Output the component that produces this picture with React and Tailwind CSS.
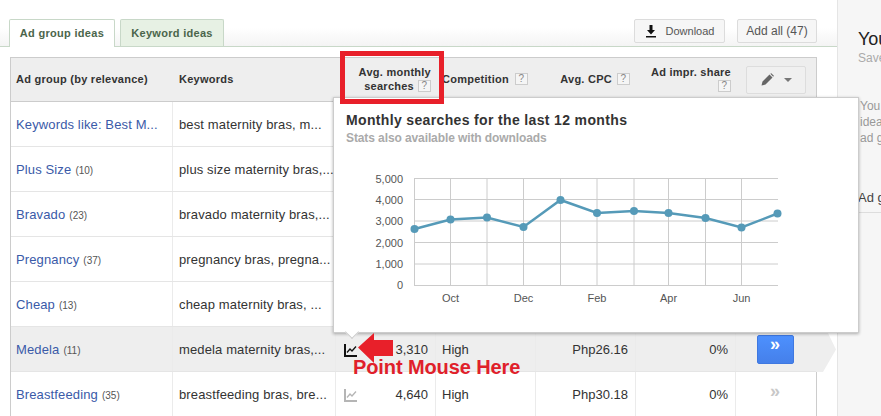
const rows = [
  { name: "Keywords like: Best M...", keywords: "best maternity bras, m..." },
  { name: "Plus Size", count: 10, keywords: "plus size maternity bras,..." },
  { name: "Bravado", count: 23, keywords: "bravado maternity bras,..." },
  { name: "Pregnancy", count: 37, keywords: "pregnancy bras, pregna..." },
  { name: "Cheap", count: 13, keywords: "cheap maternity bras, ..." },
  { name: "Medela", count: 11, keywords: "medela maternity bras,...", searches: "3,310", cpc: "Php26.16", active: true },
  { name: "Breastfeeding", count: 35, keywords: "breastfeeding bras, bre...", searches: "4,640", cpc: "Php30.18" },
];

const gridCols = "grid grid-cols-[162px_163px_100px_100px_100px_100px_80px]";

const points = [
  [414.5, 229], [450.5, 219.5], [487, 217.5], [523.5, 227], [560.5, 200], [597, 213],
  [634, 211], [668.5, 213], [705.5, 218], [741.5, 227.5], [777.5, 213.5],
];
const gridX = [450.5, 487, 523.5, 560.5, 597, 634, 668.5, 705.5, 741.5];
const gridY = [178.5, 199.5, 221, 242.5, 264];
const yLabels = [["5,000", 178.5], ["4,000", 199.5], ["3,000", 221], ["2,000", 242.5], ["1,000", 264], ["0", 285]];
const xLabels = [["Oct", 450.5], ["Dec", 523.5], ["Feb", 597], ["Apr", 668.5], ["Jun", 741.5]];

function Help() {
  return (
    <span className="inline-flex h-[12px] w-[13px] items-center justify-center border border-[#cccccc] bg-[#f5f5f5] text-[10px] font-normal leading-none text-[#888888]">
      ?
    </span>
  );
}

function TrendIcon({ active }) {
  const color = active ? "#111111" : "#b5b5b5";
  return (
    <svg width="14" height="14" viewBox="0 0 14 14" fill="none" stroke={color}>
      <path d="M1 1v12h12" strokeWidth="2" />
      <path d="M3 9.5l3-3.5 2 2 4-4.5" strokeWidth="1.3" />
    </svg>
  );
}

function Chart() {
  return (
    <svg width="460" height="170" viewBox="340 150 460 170" className="mt-[5px] ml-[6px]">
      <g stroke="#cccccc" strokeWidth="1">
        {gridX.map((x) => (
          <line key={x} x1={x} x2={x} y1="178" y2="285.5" />
        ))}
        {gridY.map((y) => (
          <line key={y} x1="414" x2="778" y1={y} y2={y} />
        ))}
        <line x1="414.5" x2="414.5" y1="178" y2="285.5" />
        <line x1="414" x2="778" y1="285.5" y2="285.5" />
      </g>
      <polyline
        points={points.map((p) => p.join(",")).join(" ")}
        fill="none"
        stroke="#559ab8"
        strokeWidth="2.5"
      />
      {points.map(([x, y]) => (
        <circle key={x} cx={x} cy={y} r="4" fill="#559ab8" />
      ))}
      <g fill="#555555" fontSize="11" fontFamily="Liberation Sans, Arial, sans-serif">
        {yLabels.map(([label, y]) => (
          <text key={label} x="403" y={y + 4} textAnchor="end">
            {label}
          </text>
        ))}
        {xLabels.map(([label, x]) => (
          <text key={label} x={x} y="302" textAnchor="middle">
            {label}
          </text>
        ))}
      </g>
    </svg>
  );
}

function Row({ row }) {
  const cell = "flex items-center border-r border-[#ebebeb] pt-[2px]";
  return (
    <div className={`${gridCols} relative h-[45px] border-b border-[#e5e5e5] ${row.active ? "bg-[#eeeeee]" : "bg-white"}`}>
      <div className={`${cell} pl-[5px] tracking-[0.13px]`}>
        <span className="whitespace-nowrap text-[#3a5aa8]">{row.name}</span>
        {row.count && <span className="ml-[4px] text-[10px] tracking-normal text-[#555555]">({row.count})</span>}
      </div>
      <div className={`${cell} pl-[6px] whitespace-nowrap tracking-[0.13px] text-[#333333]`}>{row.keywords}</div>
      <div className={`${cell} justify-between pl-[8px] pr-[7px] text-[#333333]`}>
        {row.searches && <TrendIcon active={row.active} />}
        <span>{row.searches}</span>
      </div>
      <div className={`${cell} pl-[6px] text-[#333333]`}>{row.searches && "High"}</div>
      <div className={`${cell} justify-end pr-[7px] text-[#333333]`}>{row.cpc}</div>
      <div className={`${cell} justify-end pr-[7px] text-[#333333]`}>{row.cpc && "0%"}</div>
      <div className="flex items-center justify-center pr-[2px]">
        {row.active && (
          <button className="flex h-[29px] w-[37px] items-start justify-center rounded-[2px] border border-[#3f78e0] bg-gradient-to-b from-[#4d90fe] to-[#4580ea] text-[18px] font-bold leading-[17px] text-white">
            »
          </button>
        )}
        {row.cpc && !row.active && (
          <span className="-mt-[6px] text-[18px] font-bold leading-none text-[#c8c8c8]">»</span>
        )}
      </div>
      {row.active && (
        <div className="absolute top-0 left-full h-[45px] w-[20px] bg-[#eeeeee] [clip-path:polygon(0_0,45%_0,100%_50%,35%_100%,0_100%)]" />
      )}
    </div>
  );
}

export default function App() {
  return (
    <div className="relative flex h-[416px] w-[881px] overflow-hidden bg-white font-['Liberation_Sans',Arial,sans-serif] text-[13px]">
      {/* main column */}
      <div className="w-[837px] shrink-0">
        <div className="flex h-[47px] justify-between border-b border-[#c8d8c8] bg-gradient-to-b from-white from-60% to-[#f4f4f4] pl-[9px] pr-[20px] pt-[19px]">
          <div className="flex gap-[5px]">
            <div className="-mb-px flex h-[28px] w-[106px] items-center justify-center rounded-t-[2px] border border-b-0 border-[#c8d8c8] bg-white text-[11px] font-bold tracking-[0.3px] text-[#4b654b]">
              Ad group ideas
            </div>
            <div className="flex h-[27px] w-[104px] items-center justify-center rounded-t-[2px] border border-b-0 border-[#c8d8c8] bg-[#e7f1e4] text-[11px] font-bold tracking-[0.3px] text-[#4b654b]">
              Keyword ideas
            </div>
          </div>
          <div className="flex gap-[12px]">
            <button className="flex h-[24px] w-[91px] items-center justify-center gap-[9px] rounded-[2px] border border-[#dcdcdc] bg-[#f6f6f6] text-[11px] text-[#555555]">
              <svg width="12" height="13" viewBox="0 0 12 13" fill="#111111">
                <path d="M4.5 0h3v5H10L6 9.5 2 5h2.5z" />
                <rect x="1" y="11" width="10" height="1.5" />
              </svg>
              Download
            </button>
            <button className="h-[24px] w-[80px] rounded-[2px] border border-[#dcdcdc] bg-[#f6f6f6] text-[12px] text-[#555555]">
              Add all (47)
            </button>
          </div>
        </div>

        <div className="ml-[10px] mt-[10px] w-[807px] border-l border-r border-[#cccccc]">
          <div className={`${gridCols} h-[45px] border-b border-t border-[#cccccc] bg-[#eeeeee] pb-[2px] text-[11px] font-bold leading-[14px] tracking-[0.26px] text-[#333333]`}>
            <div className="flex items-center pl-[5px]">Ad group (by relevance)</div>
            <div className="flex items-center pl-[6px]">Keywords</div>
            <div className="flex flex-col items-end justify-center pr-[5px]">
              <span>Avg. monthly</span>
              <span className="flex items-center gap-[4px]">searches <Help /></span>
            </div>
            <div className="flex items-center gap-[6px] pl-[6px]">Competition <Help /></div>
            <div className="flex items-center justify-end gap-[5px] pr-[6px]">Avg. CPC <Help /></div>
            <div className="flex flex-col items-end justify-center gap-[1px] pr-[5px]">
              <span>Ad impr. share</span>
              <Help />
            </div>
            <div className="flex items-center justify-center pt-[2px]">
              <button className="flex h-[28px] w-[60px] items-center justify-center gap-[10px] rounded-[2px] border border-[#dddddd] bg-[#f0f0f0]">
                <svg width="13" height="13" viewBox="0 0 13 13" fill="#666666">
                  <path d="M0.5 12.5l1-4L8.5 1.5l3 3-7 7zM9.3 0.8l1-.6 2.6 2.6-.7 1z" />
                </svg>
                <span className="h-0 w-0 border-x-[4px] border-t-[4px] border-x-transparent border-t-[#777777]" />
              </button>
            </div>
          </div>
          {rows.map((row) => (
            <Row key={row.name} row={row} />
          ))}
        </div>
      </div>

      {/* right panel */}
      <div className="flex-1 whitespace-nowrap border-l border-[#e5e5e5] bg-[#f6f6f6] pt-[29px]">
        <div className="pl-[20px] text-[18px] leading-[21px] text-[#222222]">Your</div>
        <div className="pl-[20px] text-[12px] leading-[16px] text-[#aaaaaa]">Saved</div>
        <div className="mt-[32px] pl-[22px] text-[12px] leading-[16px] text-[#999999]">
          <div>You can</div>
          <div>ideas</div>
          <div>ad groups</div>
        </div>
        <div className="mt-[44px] pl-[20px] text-[13px] leading-[16px] text-[#444444]">Ad groups</div>
        <div className="mt-[6px] h-px bg-[#dddddd]" />
      </div>

      {/* hover card over the table */}
      <div className="absolute left-[333px] top-[97px] h-[236px] w-[526px] border border-[#cccccc] bg-white shadow-[0_1px_3px_rgba(0,0,0,0.3)]">
        <div className="pl-[12px] pt-[14px]">
          <div className="text-[14px] font-bold leading-[16px] tracking-[0.35px] text-[#333333]">Monthly searches for the last 12 months</div>
          <div className="mt-[3px] text-[12px] font-bold leading-[14px] tracking-[-0.1px] text-[#aaaaaa]">Stats also available with downloads</div>
        </div>
        <Chart />
        <div className="absolute left-[13px] top-[229px] h-[10px] w-[10px] rotate-45 border-b border-r border-[#cccccc] bg-white" />
      </div>

      {/* red annotations */}
      <div className="absolute left-[340px] top-[51px] h-[53px] w-[104px] border-[5px] border-[#e8202a]" />
      <svg className="absolute left-[355px] top-[330px]" width="42" height="34" viewBox="0 0 42 34" fill="#e8202a">
        <path d="M3 17.5L19 3v7h19v16H19v7z" />
      </svg>
      <div className="absolute left-[353px] top-[355px] text-[20px] font-bold leading-[24px] tracking-[-0.1px] text-[#e0202a]">Point Mouse Here</div>
    </div>
  );
}
